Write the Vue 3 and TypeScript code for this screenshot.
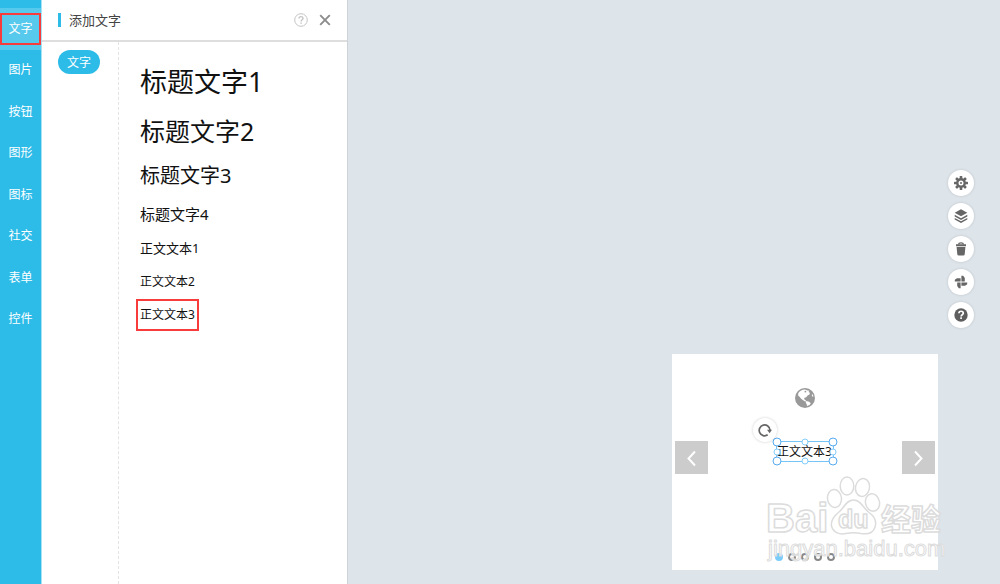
<script setup lang="ts">
import { ref } from 'vue'

interface Preset { label: string; level: string }

const categories: string[] = ['文字', '图片', '按钮', '图形', '图标', '社交', '表单', '控件']
const presets: Preset[] = [
  { label: '标题文字1', level: 'h-one' },
  { label: '标题文字2', level: 'h-two' },
  { label: '标题文字3', level: 'h-three' },
  { label: '标题文字4', level: 'h-four' },
  { label: '正文文本1', level: 'b-one' },
  { label: '正文文本2', level: 'b-two' },
  { label: '正文文本3', level: 'b-three' },
]
const handles: string[] = ['nw', 'n', 'ne', 'w', 'e', 'sw', 's', 'se']
const active = ref(0)
const chosen = ref(6)
const slide = ref(0)
</script>

<template>
  <div class="editor">
    <nav class="rail">
      <div class="rail-items">
        <button
          v-for="(name, i) in categories"
          :key="name"
          type="button"
          class="rail-item"
          :class="{ active: i === active }"
          @click="active = i"
        ><span>{{ name }}</span></button>
      </div>
    </nav>

    <aside class="panel">
      <header class="panel-head">
        <h1>添加文字</h1>
        <button type="button" class="plain" aria-label="帮助">
          <svg width="14" height="14" viewBox="0 0 14 14" fill="none" stroke="#c4c4c4">
            <circle cx="7" cy="7" r="6.3" />
            <path d="M5 5.6C5 2.9 9 3 9 5.4C9 6.8 7.1 6.7 7.1 8.4" stroke-width="1.4" />
            <path d="M7.1 9.4V10.8" stroke-width="1.5" />
          </svg>
        </button>
        <button type="button" class="plain" aria-label="关闭">
          <svg width="12" height="12" viewBox="0 0 12 12" fill="none" stroke="#8c8c8c" stroke-width="1.9">
            <path d="M1.2 1.2L10.8 10.8M10.8 1.2L1.2 10.8" />
          </svg>
        </button>
      </header>
      <div class="panel-body">
        <div class="kinds"><button type="button" class="pill">文字</button></div>
        <div class="presets">
          <button
            v-for="(p, i) in presets"
            :key="p.label"
            type="button"
            class="preset"
            :class="[p.level, { chosen: i === chosen }]"
            @click="chosen = i"
          >{{ p.label }}</button>
        </div>
      </div>
    </aside>

    <main class="stage">
      <section class="card">
        <svg class="globe" width="20" height="20" viewBox="0 0 20 20">
          <circle cx="10" cy="10" r="10" fill="#999" />
          <path fill="#fff" d="M3.2 5.2C5 2.7 7.2 1.7 9.9 1.6L12.5 2.4L14.4 2.7L13.5 4.1L14.9 4.7L14.5 6.6L12.6 7.5L11.2 9.2L9.6 9.7L9 11.1L10.4 12.1L11.4 13.2L10.1 13.4L7.8 12L5.9 10.5L4.6 8.7L3.2 7.8Z" />
          <path fill="#fff" d="M11.4 13.1L14.1 13.7L15.8 15.2L14.6 16.9L12 18.1L11.7 16.2L10.7 14.5Z" />
          <path fill="#fff" d="M17.1 5.8L18.5 8.2L17.6 8.8L16.8 7.5Z" />
          <path fill="#999" d="M9.5 3.1L11.1 2.8L11.3 4.2L9.9 4.6Z" />
        </svg>

        <div class="middle">
          <button type="button" class="arrow" aria-label="上一张">
            <svg width="33" height="33" viewBox="0 0 33 33"><path d="M20 10.500L13.500 17.500L20 24.500" /></svg>
          </button>
          <div class="selection">
            <span>正文文本3</span>
            <i v-for="h in handles" :key="h" class="handle" :class="h"></i>
            <button type="button" class="rotate" aria-label="旋转">
              <svg width="14" height="14" viewBox="0 0 14 14">
                <path d="M9.700 11.800A5.400 5.400 0 1 1 12 7" fill="none" stroke="#666" stroke-width="1.700" />
                <path d="M9 6.800H14L11.600 10.200Z" fill="#666" />
              </svg>
            </button>
          </div>
          <button type="button" class="arrow" aria-label="下一张">
            <svg width="33" height="33" viewBox="0 0 33 33"><path d="M13 10.500L19.500 17.500L13 24.500" /></svg>
          </button>
        </div>

        <div class="dots">
          <button
            v-for="n in 5"
            :key="n"
            type="button"
            class="dot"
            :class="{ on: n - 1 === slide }"
            :aria-label="`第${n}张`"
            @click="slide = n - 1"
          ></button>
        </div>

        <svg class="watermark" width="190" height="100" viewBox="0 0 190 100">
          <g class="outline">
            <text x="2" y="62" class="wm-bai">Bai</text>
            <ellipse cx="70.500" cy="28.500" rx="7" ry="9" transform="rotate(-6 70.500 28.500)" />
            <ellipse cx="83" cy="16" rx="6.800" ry="9" />
            <ellipse cx="98.500" cy="17.500" rx="7" ry="9" transform="rotate(12 98.500 17.500)" />
            <ellipse cx="108.500" cy="32.500" rx="7" ry="8.800" transform="rotate(-12 108.500 32.500)" />
            <path d="M89.500 30C97 30 99 38 105 42.500C110 46 113 51 111 57C109 64 103 64.500 97 63.500C92 62.500 87 62.500 82 63.500C75 65 69 62 67.500 56C66.500 50 70 46 75 42C80 38 82 30 89.500 30Z" />
            <text x="74" y="58" class="wm-du">du</text>
            <text x="117" y="60" class="wm-jy">经验</text>
            <text x="4" y="86" class="wm-url">jingyan.baidu.com</text>
          </g>
        </svg>
      </section>

      <div class="tools">
        <button type="button" class="tool" aria-label="设置">
          <svg width="14" height="14" viewBox="0 0 14 14">
            <g fill="#666">
              <rect v-for="n in 8" :key="n" x="5.700" y="0" width="2.600" height="3" rx=".6" :transform="`rotate(${n * 45} 7 7)`" />
            </g>
            <circle cx="7" cy="7" r="3.700" fill="none" stroke="#666" stroke-width="2.400" />
            <circle cx="7" cy="7" r="1" fill="#666" />
          </svg>
        </button>
        <button type="button" class="tool" aria-label="图层">
          <svg width="14" height="14" viewBox="0 0 14 14">
            <path d="M7 .3L13.300 3.700L7 7.200L.7 3.700Z" fill="#666" />
            <path d="M.7 5.700L7 9.200L13.300 5.700V7.500L7 11L.7 7.500ZM.7 8.900L7 12.300L13.300 8.900V10.400L7 13.900L.7 10.400Z" fill="#666" />
          </svg>
        </button>
        <button type="button" class="tool" aria-label="回收站">
          <svg width="14" height="14" viewBox="0 0 14 14">
            <path d="M4.600 2.500C4.800 .3 9.200 .3 9.400 2.500" fill="none" stroke="#666" stroke-width="1.300" />
            <path d="M2 2.200H12V4.200H2ZM2.600 5H11.400L10.700 12.300Q10.600 13.500 9.300 13.500H4.700Q3.400 13.500 3.300 12.300Z" fill="#666" />
          </svg>
        </button>
        <button type="button" class="tool" aria-label="插件">
          <svg width="14" height="14" viewBox="0 0 14 14">
            <path v-for="n in 4" :key="n" d="M7.400 6.600V.8H9.200L10.800 3V6.600Z" fill="#666" :transform="`rotate(${n * 90} 7 7)`" />
          </svg>
        </button>
        <button type="button" class="tool" aria-label="帮助中心">
          <svg width="14" height="14" viewBox="0 0 14 14">
            <circle cx="7" cy="7" r="6.700" fill="#5e5e5e" />
            <path d="M4.900 5.300C4.900 2.500 9.300 2.600 9.300 5.200C9.300 6.700 7.100 6.700 7.100 8.400M7.100 9.300V11" fill="none" stroke="#fff" stroke-width="1.700" />
          </svg>
        </button>
      </div>
    </main>
  </div>
</template>

<style>
body { margin: 0; }
</style>

<style scoped>
.editor {
  display: flex;
  min-height: 100vh;
  font-family: "Noto Sans", "Noto Sans CJK SC", sans-serif;
  font-size: 12px;
  color: #111;
}
.editor * { box-sizing: border-box; }
button {
  margin: 0;
  padding: 0;
  border: 0;
  background: none;
  font: inherit;
  color: inherit;
  cursor: pointer;
}
svg { display: block; }

.rail {
  flex: none;
  width: 42px;
  padding-top: 8px;
  background: #2dbbe8;
  border-right: 1px solid #a5e2f6;
}
.rail-items {
  display: grid;
  grid-template-rows: repeat(8, 1fr);
  height: 332px;
}
.rail-item {
  display: flex;
  align-items: center;
  color: #fff;
}
.rail-item span {
  flex: 1;
  line-height: 28px;
}
.rail-item.active { background: #57c9ed; }
.rail-item.active span {
  outline: 2px solid #f83b3b;
  margin: 0 2px;
}

.panel {
  flex: none;
  display: flex;
  flex-direction: column;
  width: 305px;
  background: #fff;
}
.panel-head {
  display: flex;
  align-items: center;
  gap: 11px;
  height: 42px;
  padding: 0 16px;
  border-bottom: 2px solid #dedede;
}
.panel-head h1 {
  flex: 1;
  margin: 0;
  padding-left: 8px;
  border-left: 3px solid #2dbbe8;
  font-size: 13px;
  font-weight: 400;
  line-height: 14px;
  color: #444;
}
.panel-body {
  flex: 1;
  display: flex;
}
.kinds {
  width: 77px;
  padding: 8px 16px;
  border-right: 1px dashed #e4e4e4;
}
.pill {
  width: 42px;
  height: 24px;
  border-radius: 12px;
  background: #2dbbe8;
  color: #fff;
}
.presets {
  display: flex;
  flex-direction: column;
  align-items: flex-start;
  padding: 15px 17px;
}
.preset {
  padding: 0 4px;
  text-align: left;
  white-space: nowrap;
}
.h-one { font-size: 27px; line-height: 50px; }
.h-two { font-size: 25px; line-height: 48px; }
.h-three { font-size: 20px; line-height: 42px; }
.h-four { font-size: 15px; line-height: 34px; }
.b-one { font-size: 13px; line-height: 34px; }
.b-two { font-size: 12px; line-height: 34px; }
.b-three { font-size: 12px; line-height: 32px; }
.chosen {
  outline: 2px solid #f83b3b;
  outline-offset: -2px;
}

.stage {
  position: relative;
  flex: 1;
  display: flex;
  justify-content: flex-end;
  align-items: flex-end;
  padding: 0 62px 14px 0;
  background: #dde4ea;
  border-left: 1px solid #ccd2d7;
}
.card {
  position: relative;
  display: flex;
  flex-direction: column;
  align-items: center;
  width: 266px;
  padding: 34px 3px 9px;
  background: #fff;
}
.middle {
  display: flex;
  align-items: center;
  justify-content: space-between;
  align-self: stretch;
  margin: 33px 0 79px;
}
.arrow {
  background: #ccc;
}
.arrow path {
  fill: none;
  stroke: #fff;
  stroke-width: 2;
}
.selection {
  position: relative;
  align-self: flex-start;
  width: 58px;
  height: 21px;
  border: 1px solid #77c4f7;
  line-height: 20px;
  white-space: nowrap;
}
.handle {
  position: absolute;
  width: 7px;
  height: 7px;
  border: 1px solid #83cefa;
  border-radius: 50%;
  background: #fff;
  transform: translate(-50%, -50%);
}
.nw, .ne, .sw, .se {
  width: 9px;
  height: 9px;
  border-color: #55abf0;
}
.nw, .w, .sw { left: 0; }
.n, .s { left: 50%; }
.ne, .e, .se { left: 100%; }
.nw, .n, .ne { top: 0; }
.w, .e { top: 50%; }
.sw, .s, .se { top: 100%; }
.rotate {
  position: absolute;
  left: -24px;
  top: -24px;
  display: grid;
  place-items: center;
  width: 24px;
  height: 24px;
  border-radius: 50%;
  background: #fff;
  box-shadow: 0 0 3px rgba(0, 0, 0, .2);
}
.dots {
  display: flex;
  gap: 5px;
}
.dot {
  width: 8px;
  height: 8px;
  border: 2px solid #888;
  border-radius: 50%;
}
.dot.on {
  border-color: #7accfa;
  background: #7accfa;
}

.watermark {
  position: absolute;
  right: -16px;
  bottom: 0;
  pointer-events: none;
}
.outline {
  fill: rgba(255, 255, 255, .7);
  stroke: #dcdcdc;
  stroke-width: 1.5px;
  stroke-linejoin: round;
  font-family: "Liberation Sans", "Noto Sans CJK SC", sans-serif;
}
.wm-bai { font-size: 40px; font-weight: 700; }
.wm-du { font-size: 25px; font-weight: 700; }
.wm-jy { font-size: 30px; font-weight: 700; }
.wm-url { font-size: 22px; stroke-width: 1px; }

.tools {
  position: absolute;
  right: 26px;
  top: 170px;
  display: grid;
  gap: 7px;
}
.tool {
  display: grid;
  place-items: center;
  width: 26px;
  height: 26px;
  border-radius: 50%;
  background: #fff;
  box-shadow: 0 0 3px rgba(0, 0, 0, .14);
}
</style>
